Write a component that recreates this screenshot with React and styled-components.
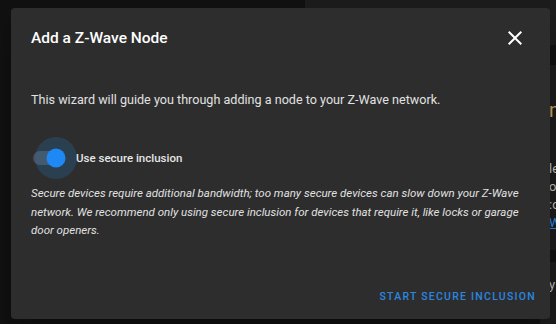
import React from "react";
import styled, { createGlobalStyle } from "styled-components";

const GlobalStyle = createGlobalStyle`
  html, body {
    margin: 0;
    padding: 0;
    background: #111111;
    font-family: Roboto, "Noto Sans", sans-serif;
  }
`;

const Page = styled.div`
  position: relative;
  width: 556px;
  height: 324px;
  overflow: hidden;
  background: #111111;
`;

const TopBar = styled.div`
  height: 45px;
  margin-left: 305px;
  background: #1c1c1c;
`;

const BackCard = styled.div`
  margin: ${(p) => p.top}px 0 0 540px;
  height: ${(p) => p.height}px;
  box-sizing: border-box;
  padding: ${(p) => p.pad}px 0 0 9px;
  background: #1c1c1c;
  color: #bdbdbd;
  font-size: 13px;
  line-height: 18px;
  overflow: hidden;
`;

const BackTitle = styled.div`
  color: #c9a25a;
  font-size: 20px;
  line-height: 20px;
  margin-bottom: 40px;
`;

const BackLink = styled.div`
  color: #2a87e0;
  text-decoration: underline;
`;

const Dialog = styled.div`
  position: absolute;
  left: 11px;
  top: 8px;
  width: 539px;
  height: 311px;
  box-sizing: border-box;
  background: #2d2d2d;
  border-radius: 4px;
  box-shadow: 0 11px 15px -7px rgba(0, 0, 0, 0.2), 0 24px 38px 3px rgba(0, 0, 0, 0.14);
  display: flex;
  flex-direction: column;
`;

const Header = styled.div`
  display: flex;
  align-items: center;
  justify-content: space-between;
  height: 60px;
  padding: 0 15px 0 20px;
`;

const Title = styled.h2`
  margin: 0;
  font-size: 15.5px;
  font-weight: 500;
  color: #ffffff;
`;

const CloseButton = styled.button`
  width: 40px;
  height: 40px;
  border: none;
  background: transparent;
  color: #ffffff;
  display: flex;
  align-items: center;
  justify-content: center;
  padding: 0;
  cursor: pointer;
`;

const Content = styled.div`
  flex: 1;
  padding: 22px 20px 0 20px;
  color: #e1e1e1;
`;

const Intro = styled.p`
  margin: 0 0 28px 0;
  font-size: 12.6px;
  line-height: 20px;
`;

const ToggleRow = styled.label`
  display: flex;
  align-items: center;
  gap: 13px;
  height: 40px;
`;

const Track = styled.span`
  position: relative;
  width: 30px;
  height: 14px;
  margin-left: 2px;
  border-radius: 7px;
  background: #4a4f55;
`;

const Halo = styled.span`
  position: absolute;
  left: 23px;
  top: 50%;
  width: 42px;
  height: 42px;
  transform: translate(-50%, -50%);
  border-radius: 50%;
  background: rgba(33, 150, 243, 0.18);
`;

const Thumb = styled.span`
  position: absolute;
  left: 23px;
  top: 50%;
  width: 19px;
  height: 19px;
  transform: translate(-50%, -50%);
  border-radius: 50%;
  background: #1e88f5;
`;

const ToggleLabel = styled.span`
  font-size: 11.5px;
  font-weight: 500;
  color: #e6e6e6;
`;

const Note = styled.p`
  margin: 6px 0 0 0;
  font-size: 11.5px;
  font-style: italic;
  line-height: 18.5px;
  color: #e1e1e1;
`;

const Actions = styled.div`
  display: flex;
  justify-content: flex-end;
  padding: 0 6px 8px 0;
`;

const TextButton = styled.button`
  border: none;
  background: transparent;
  padding: 8px 8px;
  font-family: Roboto, sans-serif;
  font-size: 10.5px;
  font-weight: 500;
  letter-spacing: 1.25px;
  color: #2a87e0;
  text-transform: uppercase;
  cursor: pointer;
`;

export default function App() {
  return (
    <Page>
      <GlobalStyle />
      <TopBar />
      <BackCard top={20} height={185} pad={35}>
        <BackTitle>m</BackTitle>
        <div>le</div>
        <div>o</div>
        <div>:c</div>
        <BackLink>W</BackLink>
      </BackCard>
      <BackCard top={12} height={70} pad={14}>
        <div>y</div>
      </BackCard>
      <Dialog>
        <Header>
          <Title>Add a Z-Wave Node</Title>
          <CloseButton aria-label="close">
            <svg width="24" height="24" viewBox="0 0 24 24" fill="currentColor">
              <path d="M19,6.41L17.59,5L12,10.59L6.41,5L5,6.41L10.59,12L5,17.59L6.41,19L12,13.41L17.59,19L19,17.59L13.41,12L19,6.41Z" />
            </svg>
          </CloseButton>
        </Header>
        <Content>
          <Intro>This wizard will guide you through adding a node to your Z-Wave network.</Intro>
          <ToggleRow>
            <Track>
              <Halo />
              <Thumb />
            </Track>
            <ToggleLabel>Use secure inclusion</ToggleLabel>
          </ToggleRow>
          <Note>
            Secure devices require additional bandwidth; too many secure devices can slow down your Z-Wave
            network. We recommend only using secure inclusion for devices that require it, like locks or garage
            door openers.
          </Note>
        </Content>
        <Actions>
          <TextButton>Start secure inclusion</TextButton>
        </Actions>
      </Dialog>
    </Page>
  );
}
